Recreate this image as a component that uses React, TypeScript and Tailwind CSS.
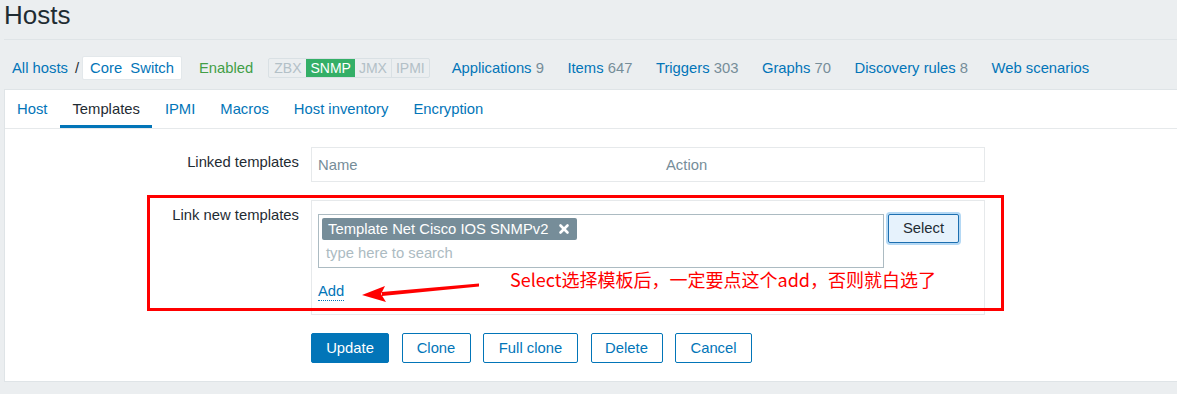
import { X } from "lucide-react";

const hostLinks = [
    { label: "Applications", count: "9" },
    { label: "Items", count: "647" },
    { label: "Triggers", count: "303" },
    { label: "Graphs", count: "70" },
    { label: "Discovery rules", count: "8" },
    { label: "Web scenarios", count: "" },
];

const tabs = ["Host", "Templates", "IPMI", "Macros", "Host inventory", "Encryption"];

const actions = [
    { label: "Clone", width: "w-[69px]" },
    { label: "Full clone", width: "w-[95px]" },
    { label: "Delete", width: "w-[72px]" },
    { label: "Cancel", width: "w-[77px]" },
];

export default function App() {
    return (
        <div className="relative h-[394px] w-full overflow-hidden bg-[#ebeef0] font-['Liberation_Sans',Arial,sans-serif] text-[14.8px] text-[#1f2c33]">
            {/* Page Header */}
            <header className="ml-[4px] h-[40px] border-b border-[#dfe4e7]">
                <h1 className="text-[26px] leading-[30px]">Hosts</h1>
            </header>

            {/* Host Navigation */}
            <nav className="flex h-[49px] items-start pl-[12px] pt-[16px] leading-[24px]">
                <a className="text-[#0275b8]">All hosts</a>
                <span className="ml-[7px] mr-[3px]">/</span>
                <span className="rounded-[2px] border border-[#e3e8eb] bg-white px-[7px] text-[#0275b8] leading-[22px]">
                    Core&nbsp; Switch
                </span>
                <span className="ml-[17px] text-[#429e47]">Enabled</span>

                <div className="ml-[15px] mt-[2px] flex h-[20px] overflow-hidden rounded-[2px] border border-[#d9e0e4] text-[14px] leading-[18px] text-[#b3c0c7]">
                    <span className="px-[5px]">ZBX</span>
                    <span className="bg-[#34af67] px-[4px] text-white">SNMP</span>
                    <span className="border-r border-[#d9e0e4] px-[4px]">JMX</span>
                    <span className="px-[4px]">IPMI</span>
                </div>

                <div className="ml-[22px] flex gap-[23.5px]">
                    {hostLinks.map((link) => (
                        <a key={link.label} className="text-[#0275b8]">
                            {link.label}
                            {link.count && (
                                <span className="text-[#768d99]"> {link.count}</span>
                            )}
                        </a>
                    ))}
                </div>
            </nav>

            {/* Form Panel */}
            <main className="ml-[4px] border border-r-0 border-[#dfe4e7] bg-white">
                <ul className="flex h-[39px] gap-px border-b border-[#e6e9eb]">
                    {tabs.map((tab) => (
                        <li
                            key={tab}
                            className={
                                tab === "Templates"
                                    ? "flex items-center px-[12px] text-[#1f2c33] shadow-[inset_0_-3px_0_#0275b8]"
                                    : "flex items-center px-[12px] text-[#0275b8]"
                            }
                        >
                            {tab}
                        </li>
                    ))}
                </ul>

                <form className="pt-[18px] pb-[18px]">
                    {/* Linked Templates */}
                    <div className="flex">
                        <label className="w-[294px] pt-[7px] text-right leading-[17px]">
                            Linked templates
                        </label>
                        <div className="ml-[12px] flex h-[35px] w-[674px] items-center border border-[#e6e9eb] pt-[2px] text-[#768d99]">
                            <span className="w-[354px] pl-[6px]">Name</span>
                            <span>Action</span>
                        </div>
                    </div>

                    {/* Link New Templates */}
                    <div className="mt-[18px] flex">
                        <label className="w-[294px] pt-[7px] text-right leading-[17px]">
                            Link new templates
                        </label>
                        <div className="ml-[12px] w-[674px] border border-[#e6e9eb] px-[6px] pt-[13px] pb-[12px]">
                            <div className="flex items-start">
                                <div className="w-[566px] border border-[#acbbc2] p-[3px]">
                                    <span className="inline-flex h-[22px] items-center gap-[9px] rounded-[2px] bg-[#768d99] pl-[6px] pr-[6px] text-white">
                                        Template Net Cisco IOS SNMPv2
                                        <X size={14} strokeWidth={4.5} />
                                    </span>
                                    <div className="h-[24px] px-[4px] pt-[1px] leading-[24px] text-[#acbbc2]">
                                        type here to search
                                    </div>
                                </div>
                                <button
                                    type="button"
                                    className="ml-[4px] h-[29px] w-[71px] rounded-[2px] border border-[#1d6fb0] bg-[#e6f2fc] text-[#1f2c33] shadow-[0_0_0_2px_#b4d8f4]"
                                >
                                    Select
                                </button>
                            </div>
                            <a className="mt-[15px] inline-block border-b border-dotted border-[#0275b8] leading-[17px] text-[#0275b8]">
                                Add
                            </a>
                        </div>
                    </div>

                    {/* Form Actions */}
                    <div className="ml-[306px] mt-[18px] flex gap-[12.5px]">
                        <button
                            type="button"
                            className="h-[30px] w-[78px] rounded-[2px] border border-[#0275b8] bg-[#0275b8] text-white"
                        >
                            Update
                        </button>
                        {actions.map((action) => (
                            <button
                                key={action.label}
                                type="button"
                                className={`h-[30px] ${action.width} rounded-[2px] border border-[#0275b8] bg-white text-[#0275b8]`}
                            >
                                {action.label}
                            </button>
                        ))}
                    </div>
                </form>
            </main>

            {/* Annotation Overlay */}
            <div className="pointer-events-none absolute left-[147px] top-[195px] h-[116px] w-[857px] border-[3px] border-[#ff0000]" />
            <p className="pointer-events-none absolute left-[510px] top-[269px] font-['Noto_Sans_CJK_SC',sans-serif] text-[18px] leading-[20px] text-[#ff0000]">
                Select选择模板后，一定要点这个add，否则就白选了
            </p>
            <svg
                className="pointer-events-none absolute left-0 top-0"
                width="1177"
                height="394"
            >
                <polygon points="479,283.5 479,286.5 382,296 382,292" fill="#ff0000" />
                <polygon points="362,295 385,286 381,294 386,302" fill="#ff0000" />
            </svg>
        </div>
    );
}
